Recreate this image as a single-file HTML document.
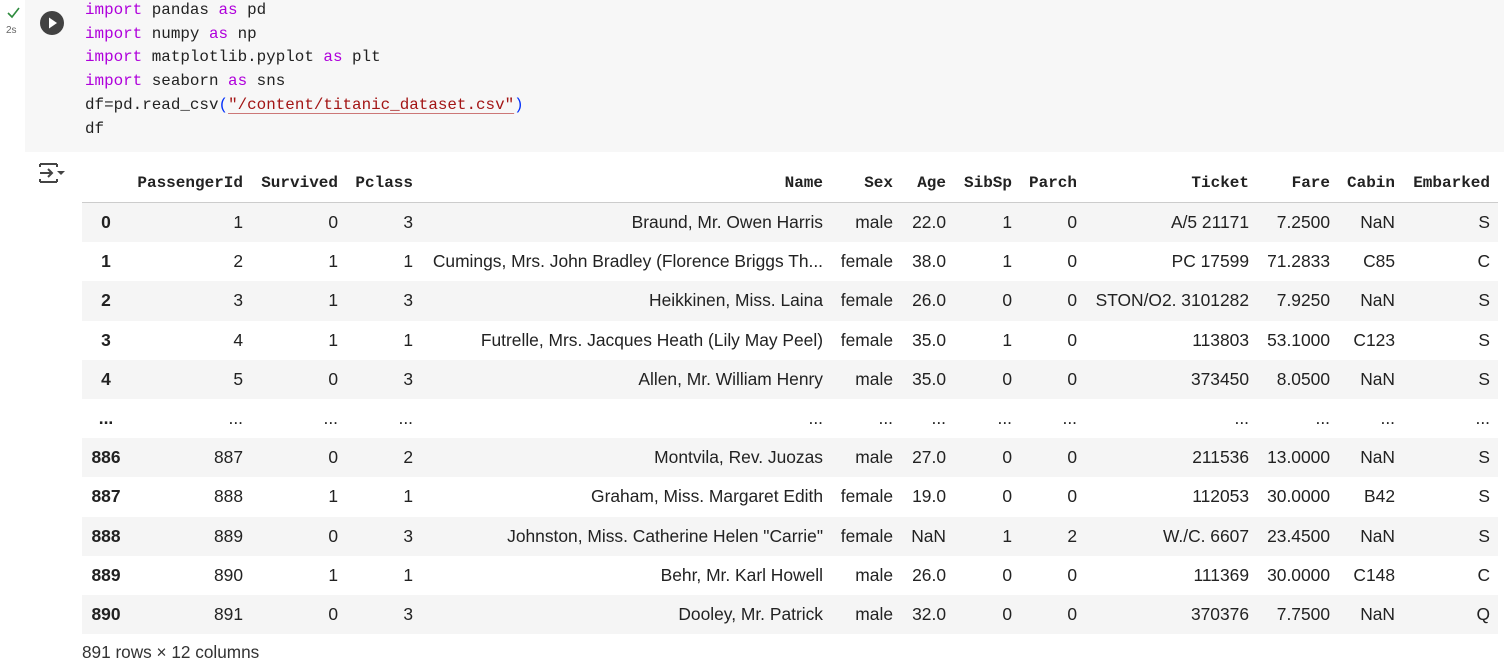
<!DOCTYPE html>
<html><head><meta charset="utf-8"><style>
body{margin:0;width:1504px;height:672px;background:#fff;position:relative;overflow:hidden;font-family:"Liberation Sans",Arial,sans-serif;}
.cell{position:absolute;left:25px;top:0;width:1479px;height:152px;background:#f7f7f7;}
.code{position:absolute;left:85px;top:-1px;font-family:"Liberation Mono",monospace;font-size:15.9px;line-height:23.7px;color:#222;white-space:pre;}
.k{color:#af00db}
.s{color:#a31515;text-decoration:underline;text-decoration-color:#c77;text-underline-offset:4px}
.p{color:#0431fa}
table{position:absolute;left:82px;top:164px;border-collapse:collapse;table-layout:fixed;width:1416px;font-size:17.4px;color:#222}
td,th{height:39.2px;padding:0 8px 0 0;text-align:right;white-space:nowrap;overflow:hidden;}
thead th{font-family:"Liberation Mono",monospace;font-size:16px;font-weight:bold;border-bottom:1px solid #ccc;height:38px}
tbody th{text-align:center;padding:0;font-weight:bold}
tbody tr:nth-child(odd){background:#f5f5f5}
.foot{position:absolute;left:82px;top:642px;font-size:17.2px;color:#333}
</style></head><body>
<div class="cell"></div>
<svg style="position:absolute;left:6px;top:6px" width="16" height="14"><path d="M2 7 L6 11 L13 2" stroke="#2e8b3e" stroke-width="1.6" fill="none"/></svg>
<div style="position:absolute;left:6px;top:25px;font-size:10px;color:#666">2s</div>
<svg style="position:absolute;left:39px;top:10px" width="26" height="26"><circle cx="13" cy="13" r="12" fill="#424242"/><path d="M10 7.5 L18 13 L10 18.5Z" fill="#fff"/></svg>
<svg style="position:absolute;left:38px;top:161px" width="28" height="24"><path d="M2 3 H19 M2 21 H19 M2 3 V6 M2 21 V18 M19 3 V6 M19 21 V18 M2 12 H14 M10 8 L14 12 L10 16" stroke="#444" stroke-width="2" fill="none"/><path d="M19 10 H27 L23 14Z" fill="#444"/></svg>
<div class="code"><span class="k">import</span> pandas <span class="k">as</span> pd
<span class="k">import</span> numpy <span class="k">as</span> np
<span class="k">import</span> matplotlib.pyplot <span class="k">as</span> plt
<span class="k">import</span> seaborn <span class="k">as</span> sns
df=pd.read_csv<span class="p">(</span><span class="s">"/content/titanic_dataset.csv"</span><span class="p">)</span>
df</div>
<table>
<colgroup><col style="width:48px"><col style="width:121px"><col style="width:95px"><col style="width:75px"><col style="width:410px"><col style="width:70px"><col style="width:53px"><col style="width:66px"><col style="width:65px"><col style="width:172px"><col style="width:81px"><col style="width:65px"><col style="width:95px"></colgroup>
<thead><tr><th></th><th>PassengerId</th><th>Survived</th><th>Pclass</th><th>Name</th><th>Sex</th><th>Age</th><th>SibSp</th><th>Parch</th><th>Ticket</th><th>Fare</th><th>Cabin</th><th>Embarked</th></tr></thead>
<tbody>
<tr><th>0</th><td>1</td><td>0</td><td>3</td><td>Braund, Mr. Owen Harris</td><td>male</td><td>22.0</td><td>1</td><td>0</td><td>A/5 21171</td><td>7.2500</td><td>NaN</td><td>S</td></tr>
<tr><th>1</th><td>2</td><td>1</td><td>1</td><td>Cumings, Mrs. John Bradley (Florence Briggs Th...</td><td>female</td><td>38.0</td><td>1</td><td>0</td><td>PC 17599</td><td>71.2833</td><td>C85</td><td>C</td></tr>
<tr><th>2</th><td>3</td><td>1</td><td>3</td><td>Heikkinen, Miss. Laina</td><td>female</td><td>26.0</td><td>0</td><td>0</td><td>STON/O2. 3101282</td><td>7.9250</td><td>NaN</td><td>S</td></tr>
<tr><th>3</th><td>4</td><td>1</td><td>1</td><td>Futrelle, Mrs. Jacques Heath (Lily May Peel)</td><td>female</td><td>35.0</td><td>1</td><td>0</td><td>113803</td><td>53.1000</td><td>C123</td><td>S</td></tr>
<tr><th>4</th><td>5</td><td>0</td><td>3</td><td>Allen, Mr. William Henry</td><td>male</td><td>35.0</td><td>0</td><td>0</td><td>373450</td><td>8.0500</td><td>NaN</td><td>S</td></tr>
<tr style="background:#fff"><th>...</th><td>...</td><td>...</td><td>...</td><td>...</td><td>...</td><td>...</td><td>...</td><td>...</td><td>...</td><td>...</td><td>...</td><td>...</td></tr>
<tr style="background:#f5f5f5"><th>886</th><td>887</td><td>0</td><td>2</td><td>Montvila, Rev. Juozas</td><td>male</td><td>27.0</td><td>0</td><td>0</td><td>211536</td><td>13.0000</td><td>NaN</td><td>S</td></tr>
<tr style="background:#fff"><th>887</th><td>888</td><td>1</td><td>1</td><td>Graham, Miss. Margaret Edith</td><td>female</td><td>19.0</td><td>0</td><td>0</td><td>112053</td><td>30.0000</td><td>B42</td><td>S</td></tr>
<tr style="background:#f5f5f5"><th>888</th><td>889</td><td>0</td><td>3</td><td>Johnston, Miss. Catherine Helen "Carrie"</td><td>female</td><td>NaN</td><td>1</td><td>2</td><td>W./C. 6607</td><td>23.4500</td><td>NaN</td><td>S</td></tr>
<tr style="background:#fff"><th>889</th><td>890</td><td>1</td><td>1</td><td>Behr, Mr. Karl Howell</td><td>male</td><td>26.0</td><td>0</td><td>0</td><td>111369</td><td>30.0000</td><td>C148</td><td>C</td></tr>
<tr style="background:#f5f5f5"><th>890</th><td>891</td><td>0</td><td>3</td><td>Dooley, Mr. Patrick</td><td>male</td><td>32.0</td><td>0</td><td>0</td><td>370376</td><td>7.7500</td><td>NaN</td><td>Q</td></tr>
</tbody></table>
<div class="foot">891 rows × 12 columns</div>
</body></html>
